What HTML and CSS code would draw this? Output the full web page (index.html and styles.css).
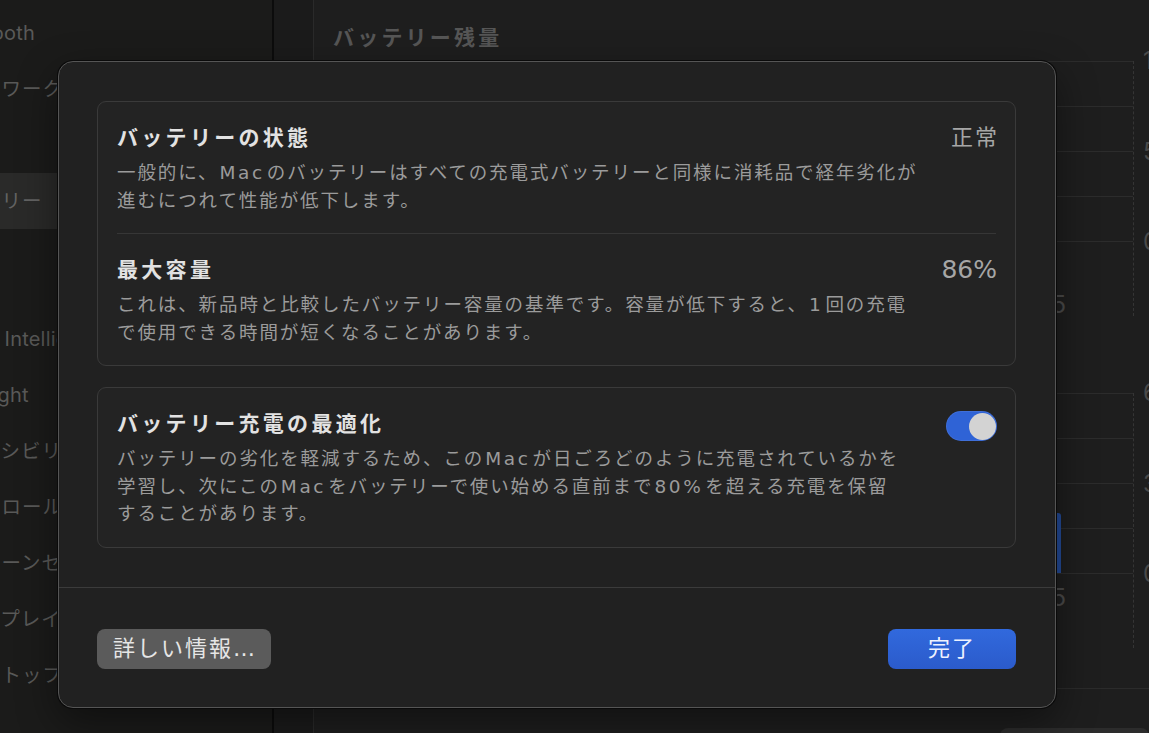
FILE: index.html
```html
<!DOCTYPE html>
<html lang="ja">
<head>
<meta charset="utf-8">
<title>バッテリーの状態</title>
<link rel="stylesheet" href="styles.css">
</head>
<body>
<div class="window">
  <aside class="sidebar">
    <ul class="nav">
      <li class="latin">Bluetooth</li>
      <li>ネットワーク</li>
      <li>VPN</li>
      <li class="active">バッテリー</li>
      <li class="gap">一般</li>
      <li class="latin">Apple Intelligence &amp; Siri</li>
      <li class="latin">Spotlight</li>
      <li>アクセシビリティ</li>
      <li>コントロールセンター</li>
      <li>スクリーンセーバー</li>
      <li>ディスプレイ</li>
      <li>デスクトップとDock</li>
    </ul>
  </aside>
  <main class="main">
    <div class="gutter"></div>
    <section class="content">
      <h2 class="heading">バッテリー残量</h2>
      <div class="chart">
        <div class="plot">
          <div class="grid"></div>
          <div class="xaxis x1"><span>12</span><span>15</span></div>
        </div>
        <div class="yaxis"><span>100%</span><span>50%</span><span>0%</span></div>
      </div>
      <h2 class="heading second">画面使用時間</h2>
      <div class="chart">
        <div class="plot">
          <div class="grid bars"><div class="bar"></div></div>
          <div class="xaxis x2"><span>12</span><span>15</span></div>
        </div>
        <div class="yaxis"><span>60分</span><span>30分</span><span>0分</span></div>
      </div>
      <div class="content-footer"><button class="ghost-btn">オプション…</button></div>
    </section>
  </main>
</div>

<div class="dialog">
  <div class="dialog-body">
    <div class="card">
      <div class="row">
        <div class="row-text">
          <div class="row-title">バッテリーの状態</div>
          <div class="row-desc">一般的に、<span class="latin">Mac</span>のバッテリーはすべての充電式バッテリーと同様に消耗品で経年劣化が<br>進むにつれて性能が低下します。</div>
        </div>
        <div class="value">正常</div>
      </div>
      <div class="divider"></div>
      <div class="row">
        <div class="row-text">
          <div class="row-title">最大容量</div>
          <div class="row-desc">これは、新品時と比較したバッテリー容量の基準です。容量が低下すると、<span class="latin">1</span>回の充電<br>で使用できる時間が短くなることがあります。</div>
        </div>
        <div class="value num">86%</div>
      </div>
    </div>
    <div class="card">
      <div class="row">
        <div class="row-text">
          <div class="row-title">バッテリー充電の最適化</div>
          <div class="row-desc">バッテリーの劣化を軽減するため、この<span class="latin">Mac</span>が日ごろどのように充電されているかを<br>学習し、次にこの<span class="latin">Mac</span>をバッテリーで使い始める直前まで<span class="latin">80%</span>を超える充電を保留<br>することがあります。</div>
        </div>
        <div class="toggle"><div class="knob"></div></div>
      </div>
    </div>
  </div>
  <div class="dialog-footer">
    <button class="btn">詳しい情報…</button>
    <button class="btn btn-primary">完了</button>
  </div>
</div>
</body>
</html>
```

FILE: styles.css
```css
html, body {
  margin: 0;
  padding: 0;
}
body {
  width: 1149px;
  height: 733px;
  overflow: hidden;
  position: relative;
  background: #1e1e1e;
  font-family: "Inter", "Noto Sans CJK JP", sans-serif;
}

.window {
  display: flex;
  height: 733px;
}

/* sidebar */
.sidebar {
  width: 272px;
  flex: none;
  background: #1b1b1a;
  border-right: 2px solid #0c0c0c;
  overflow: hidden;
}
.nav {
  list-style: none;
  margin: 5px 0 0 -60px;
  padding: 0;
}
.nav li {
  height: 56px;
  line-height: 56px;
  font-size: 19.5px;
  letter-spacing: 1px;
  color: #595958;
  white-space: nowrap;
}
.nav li.latin {
  font-size: 20px;
  letter-spacing: 0.2px;
  text-indent: 3px;
}
.nav li.gap {
  margin-top: 26px;
}
.nav li.active {
  background: #2a2a29;
  color: #636363;
}

/* main */
.main {
  flex: 1;
  display: flex;
  min-width: 0;
  background: #1e1e1e;
}
.gutter {
  width: 39px;
  flex: none;
  background: #1b1b1b;
  border-right: 1px solid #2a2a2a;
}
.content {
  flex: 1;
  min-width: 0;
  padding: 24px 0 0 19px;
}
.heading {
  margin: 0 0 9px;
  font-size: 21px;
  line-height: 28px;
  font-weight: 700;
  letter-spacing: 3.2px;
  color: #565656;
}
.heading.second {
  margin: 16px 0 33px;
}
.chart {
  display: flex;
  gap: 9px;
}
.plot {
  flex: 1;
  height: 255px;
  border-right: 1px dashed #353535;
  display: flex;
  flex-direction: column;
}
.grid {
  height: 181px;
  flex: none;
  background: repeating-linear-gradient(to bottom, #2c2c2c 0, #2c2c2c 1px, transparent 1px, transparent 45px);
}
.grid.bars {
  display: flex;
  align-items: flex-end;
  justify-content: flex-end;
  padding: 0 72px 1px 0;
  box-sizing: border-box;
}
.bar {
  width: 20px;
  height: 60px;
  background: #234a96;
  border-radius: 3px 3px 0 0;
}
.xaxis {
  display: flex;
  justify-content: flex-end;
  gap: 130px;
  padding-right: 67px;
  font-size: 24px;
  line-height: 28px;
  color: #4a4a4a;
}
.xaxis.x1 {
  margin-top: 49px;
}
.xaxis.x2 {
  margin-top: 10px;
}
.yaxis {
  width: 6px;
  height: 209px;
  margin-top: -14px;
  display: flex;
  flex-direction: column;
  justify-content: space-between;
  font-size: 24px;
  line-height: 28px;
  color: #4a4a4a;
  white-space: nowrap;
}
.content-footer {
  margin-top: 40px;
  border-top: 1px solid #2b2b2b;
  padding: 39px 0 0;
  display: flex;
  justify-content: flex-end;
}
.ghost-btn {
  width: 149px;
  height: 34px;
  border: none;
  border-radius: 8px;
  background: #2c2c2c;
  color: #555;
  font: inherit;
}

/* dialog */
.dialog {
  position: absolute;
  left: 58px;
  top: 61px;
  width: 998px;
  height: 647px;
  box-sizing: border-box;
  background: #212121;
  border: 1px solid #555555;
  border-radius: 15px;
  box-shadow: 0 0 0 1px #0a0a0a, 0 14px 40px rgba(0, 0, 0, 0.45);
  display: flex;
  flex-direction: column;
  font-family: "DejaVu Sans", "Noto Sans CJK JP", sans-serif;
}
.dialog-body {
  padding: 39px 39px 0 38px;
  display: flex;
  flex-direction: column;
  gap: 21px;
}
.card {
  background: #232323;
  border: 1px solid #3a3a3a;
  border-radius: 9px;
}
.row {
  display: flex;
  justify-content: space-between;
  align-items: flex-start;
  padding: 22px 18px 19px 19px;
}
.row-title {
  font-size: 21px;
  line-height: 28px;
  font-weight: 700;
  letter-spacing: 3.3px;
  color: #e2e2e2;
  margin-bottom: 7px;
}
.row-desc {
  font-size: 18.5px;
  line-height: 27.5px;
  letter-spacing: 1.9px;
  color: #9b9b9b;
  white-space: nowrap;
}
.row-desc .latin {
  letter-spacing: 2.6px;
  margin: 0 2px 0 1px;
}
.divider {
  height: 1px;
  background: #363636;
  margin: 0 19px;
}
.value {
  font-size: 22px;
  line-height: 28px;
  letter-spacing: 2px;
  margin-right: -2px;
  color: #a6a6a6;
}
.value.num {
  font-size: 25px;
  letter-spacing: 0;
  margin-right: 0;
}
.toggle {
  width: 51px;
  height: 30px;
  margin-top: 1px;
  box-sizing: border-box;
  padding: 0 1.5px;
  border-radius: 15px;
  background: #2f63d6;
  box-shadow: inset 0 0 0 1px rgba(255, 255, 255, 0.08);
  display: flex;
  align-items: center;
  justify-content: flex-end;
}
.knob {
  width: 27px;
  height: 27px;
  border-radius: 50%;
  background: #d3d3d3;
}
.dialog-footer {
  margin-top: auto;
  border-top: 1px solid #3b3b3b;
  padding: 41px 39px 38px 38px;
  display: flex;
  justify-content: space-between;
}
.btn {
  height: 40px;
  box-sizing: border-box;
  border: none;
  border-radius: 8px;
  padding: 0 14px 0 16px;
  font-family: inherit;
  font-size: 22px;
  line-height: 40px;
  letter-spacing: 2px;
  color: #e6e6e6;
  background: #5b5b5b;
}
.btn-primary {
  width: 128px;
  padding: 0;
  text-align: center;
  color: #eef2ff;
  background: linear-gradient(#3169dd, #2b5bcb);
}
```
